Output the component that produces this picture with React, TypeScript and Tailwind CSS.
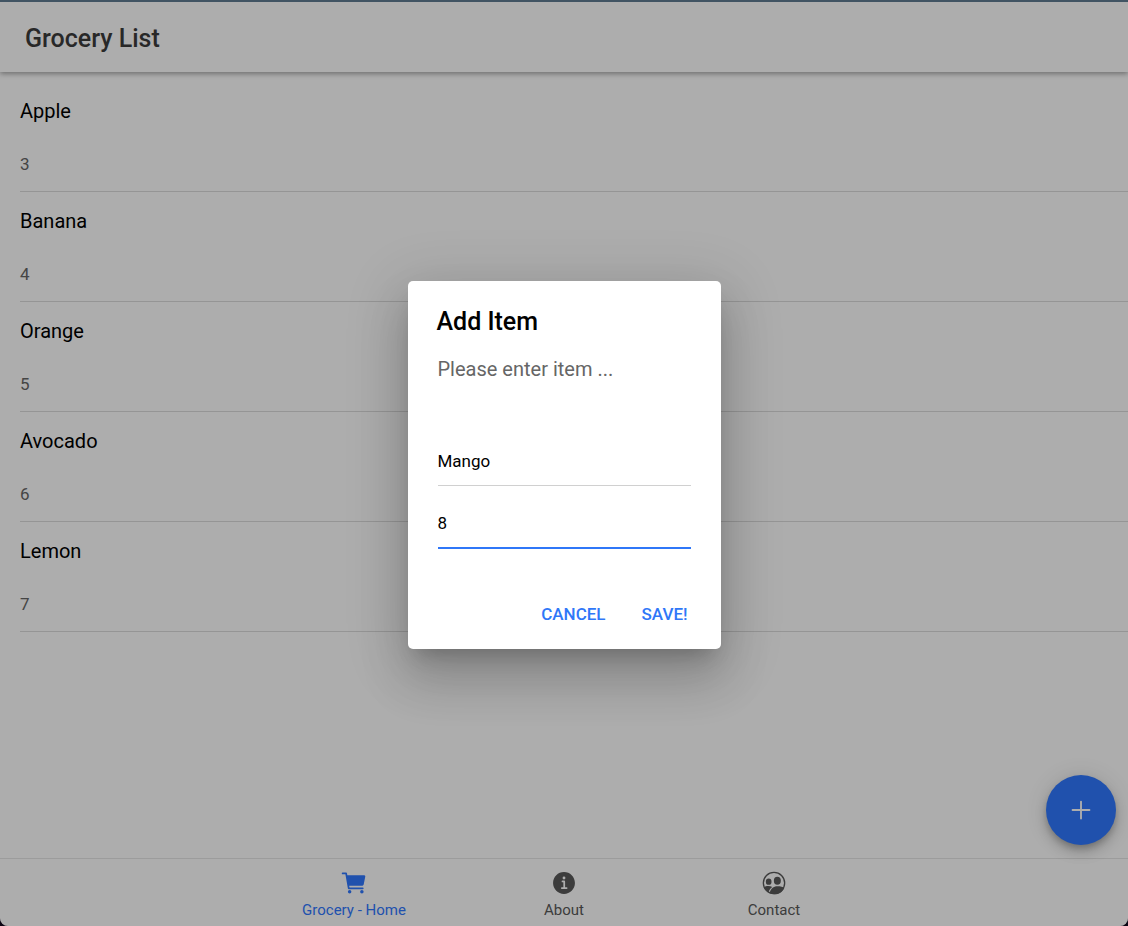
import { IoAdd, IoCart, IoInformationCircle } from "react-icons/io5";

const items = [
  { name: "Apple", quantity: 3 },
  { name: "Banana", quantity: 4 },
  { name: "Orange", quantity: 5 },
  { name: "Avocado", quantity: 6 },
  { name: "Lemon", quantity: 7 },
];

function PeopleCircle({ className }: { className?: string }) {
  return (
    <svg viewBox="0 0 84 84" className={className} fill="currentColor" aria-hidden="true">
      <circle cx="42" cy="42" r="32" fill="none" stroke="currentColor" strokeWidth="4" />
      <ellipse cx="26" cy="38" rx="8.5" ry="9.5" />
      <ellipse cx="52" cy="35" rx="10.5" ry="12" />
      <path d="M11 55C18 50 30 50 37 54C31 58 28 62 26 70C19 66 14 61 11 55Z" />
      <path d="M29 73C31 59 41 52 52 52C62 52 69 54 73 57C67 70 56 76 44 76C38 76 33 75 29 73Z" />
    </svg>
  );
}

const tabs = [
  { label: "Grocery - Home", Icon: IoCart, active: true },
  { label: "About", Icon: IoInformationCircle, active: false },
  { label: "Contact", Icon: PeopleCircle, active: false },
];

function AddItemDialog() {
  return (
    <div className="absolute inset-0 flex items-center justify-center bg-black/32 pt-0.5">
      <div
        role="dialog"
        aria-modal="true"
        aria-labelledby="dialog-title"
        className="w-[313px] rounded-[5px] bg-white shadow-[0_14px_19px_-9px_rgba(0,0,0,0.2),0_30px_48px_4px_rgba(0,0,0,0.14),0_11px_58px_10px_rgba(0,0,0,0.12)]"
      >
        <h2 id="dialog-title" className="px-[29px] pt-[25px] text-[25px] leading-8 font-medium">
          Add Item
        </h2>
        <p className="px-[30px] pt-[15px] text-xl leading-8 text-[#666666]">Please enter item ...</p>
        <div className="flex flex-col px-[30px] pt-[52px]">
          <input
            aria-label="Item name"
            defaultValue="Mango"
            className="h-[49px] w-full border-b border-[#d0d0d0] text-[17px] outline-none"
          />
          <input
            aria-label="Quantity"
            defaultValue="8"
            className="mt-3 h-[51px] w-full border-b-2 border-[#2f77f8] text-[17px] outline-none"
          />
        </div>
        <div className="flex justify-end gap-3 px-[21px] pt-11 pb-3">
          <button className="h-11 px-3 text-[17px] font-medium text-[#2f77f8]">CANCEL</button>
          <button className="h-11 px-3 text-[17px] font-medium text-[#2f77f8]">SAVE!</button>
        </div>
      </div>
    </div>
  );
}

export default function App() {
  return (
    <div className="min-h-screen bg-[#0c0614] font-[Roboto,sans-serif] text-black">
      <div className="relative flex min-h-screen flex-col overflow-hidden rounded-b-lg border-t-2 border-[#415463] bg-white">
        <header className="flex h-[70px] shrink-0 items-center px-[25px] pt-1 shadow-[0_2px_5px_rgba(0,0,0,0.35)]">
          <h1 className="text-[25px] leading-8 font-medium text-[#3c3c3c]">Grocery List</h1>
        </header>
        <main className="relative flex-1 pt-2.5">
          <ul className="pl-5">
            {items.map((item) => (
              <li key={item.name} className="flex h-[110px] flex-col border-b border-[#dcdcdc] pt-4">
                <h2 className="text-xl leading-[26px]">{item.name}</h2>
                <p className="pt-7 text-[17px] leading-6 text-[#666666]">{item.quantity}</p>
              </li>
            ))}
          </ul>
          <button
            aria-label="Add item"
            className="absolute right-3 bottom-[13px] flex size-[70px] items-center justify-center rounded-full bg-[#3078ff] text-white shadow-[0_4px_6px_-1px_rgba(0,0,0,0.2),0_8px_13px_0_rgba(0,0,0,0.14),0_1px_22px_0_rgba(0,0,0,0.12)]"
          >
            <IoAdd className="size-[30px]" />
          </button>
        </main>
        <nav className="flex h-[68px] shrink-0 justify-center border-t border-[#e6e6e6]">
          {tabs.map(({ label, Icon, active }) => (
            <a
              key={label}
              href="#"
              className={
                active
                  ? "flex w-[210px] flex-col items-center pt-2.5 text-[#3078ff]"
                  : "flex w-[210px] flex-col items-center pt-2.5 text-[#595959]"
              }
            >
              <Icon className="size-7" />
              <span className="pt-[3px] text-[15px] leading-5">{label}</span>
            </a>
          ))}
        </nav>
        <AddItemDialog />
      </div>
    </div>
  );
}
